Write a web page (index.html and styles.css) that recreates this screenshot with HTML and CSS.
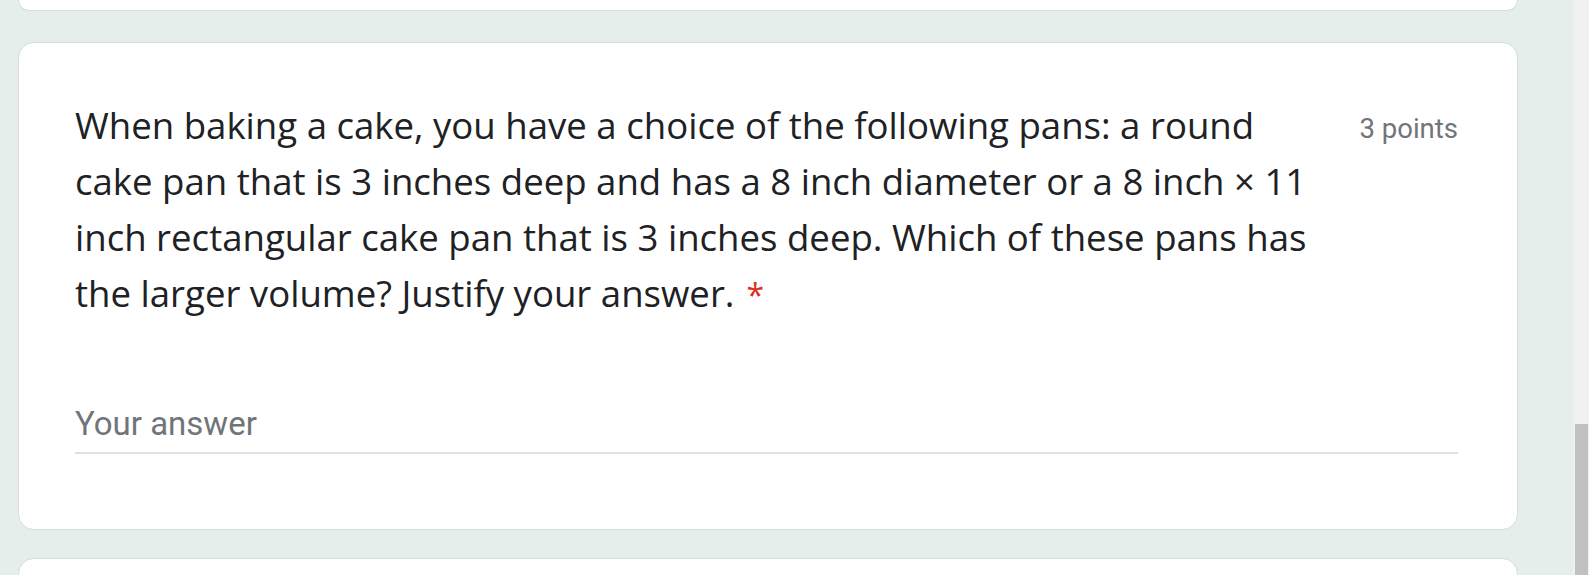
FILE: index.html
```html
<!DOCTYPE html>
<html lang="en">
<head>
<meta charset="utf-8">
<title>Question</title>
<link rel="stylesheet" href="styles.css">
</head>
<body>
<div class="page">
  <main class="form">
    <div class="card card-prev"></div>
    <section class="card question">
      <div class="q-head">
        <div class="q-title">When baking a cake, you have a choice of the following pans: a round cake pan that is 3 inches deep and has a 8 inch diameter or a 8 inch × 11 inch rectangular cake pan that is 3 inches deep. Which of these pans has the larger volume? Justify your answer.<span class="req">*</span></div>
        <div class="q-points">3 points</div>
      </div>
      <div class="answer">
        <div class="answer-placeholder">Your answer</div>
      </div>
    </section>
    <div class="card card-next"></div>
  </main>
  <div class="scrollbar"><div class="thumb"></div></div>
</div>
</body>
</html>
```
FILE: styles.css
```css
html, body {
  margin: 0;
  padding: 0;
  height: 100%;
  overflow: hidden;
}
body {
  background: #e5eeea;
  font-family: Roboto, "Liberation Sans", Arial, sans-serif;
}
.page {
  display: flex;
  height: 575px;
}
.form {
  flex: 1;
  padding: 0 55px 0 18px;
  display: flex;
  flex-direction: column;
  overflow: hidden;
}
.card {
  background: #fff;
  border: 1px solid #dadce0;
  border-radius: 16px;
  box-sizing: border-box;
  flex-shrink: 0;
}
.card-prev {
  height: 11px;
  border-top: 0;
  border-radius: 0 0 16px 16px;
}
.question {
  margin-top: 31px;
  height: 488px;
  padding: 54px 59px 0 56px;
}
.card-next {
  margin-top: 28px;
  height: 60px;
}
.q-head {
  display: flex;
  align-items: flex-start;
}
.q-title {
  flex: 1;
  max-width: 1250px;
  font-family: "Open Sans", sans-serif;
  font-size: 36.6px;
  line-height: 56px;
  color: #202124;
}
.req {
  color: #d93025;
  font-size: 32px;
  line-height: 1;
  margin-left: 12px;
}
.q-points {
  margin-left: auto;
  padding-top: 12px;
  font-size: 27.5px;
  line-height: 40px;
  color: #70757a;
  white-space: nowrap;
}
.answer {
  margin-top: 83px;
  border-bottom: 2px solid #e0e0e0;
  padding-bottom: 8px;
}
.answer-placeholder {
  font-size: 33px;
  line-height: 40px;
  color: #70757a;
}
.scrollbar {
  width: 16px;
  background: #f1f1f1;
  display: flex;
  flex-direction: column;
  justify-content: flex-end;
  align-items: center;
}
.thumb {
  width: 13px;
  height: 151px;
  background: #c1c1c1;
}
```
